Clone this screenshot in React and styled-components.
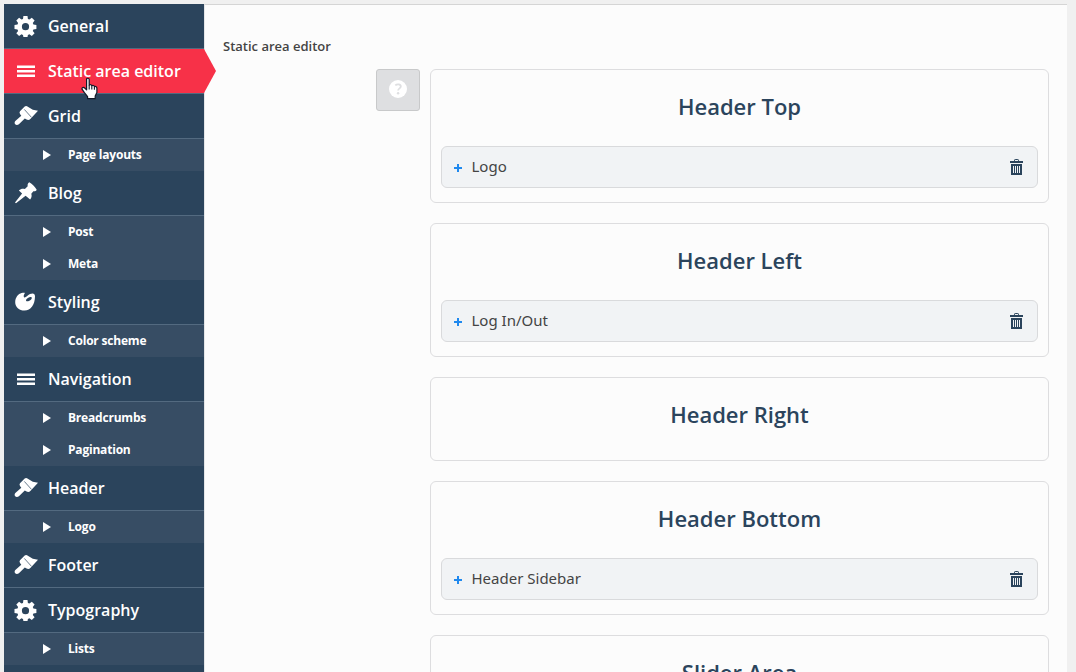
import React from 'react';
import styled, { createGlobalStyle, css } from 'styled-components';

const GlobalStyle = createGlobalStyle`
  * { box-sizing: border-box; }
  html, body { margin: 0; padding: 0; }
  body {
    background: #f0f0f0;
    font-family: "Open Sans", "Noto Sans", sans-serif;
    overflow: hidden;
  }
`;

const Page = styled.div`
  display: flex;
  height: 672px;
  padding: 4px 9px 0 4px;
  overflow: hidden;
`;

const Sidebar = styled.nav`
  flex: 0 0 200px;
  height: 668px;
  background: #2b445c;
  color: #fff;
`;

const MenuItem = styled.div`
  position: relative;
  display: flex;
  align-items: center;
  height: 45px;
  padding-left: 9px;
  border-bottom: 1px solid #536a80;
  font-size: 16px;
  font-weight: 600;
  white-space: nowrap;
  ${(p) =>
    p.$active &&
    css`
      background: #f73148;
      &::after {
        content: '';
        position: absolute;
        left: 200px;
        top: 0;
        border-style: solid;
        border-width: 22px 0 22px 12px;
        border-color: transparent transparent transparent #f73148;
      }
    `}
`;

const MenuIcon = styled.span`
  display: flex;
  flex: 0 0 35px;
  height: 24px;
  svg { display: block; }
`;

const MenuLabel = styled.span`
  padding-bottom: 1px;
`;

const SubList = styled.div`
  background: #374d64;
`;

const SubItem = styled.div`
  display: flex;
  align-items: center;
  height: 32px;
  padding-left: 39px;
  font-size: 12px;
  font-weight: 700;
  letter-spacing: -0.2px;
`;

const SubLabel = styled.span`
  padding-bottom: 2px;
`;

const Arrow = styled.i`
  margin-right: 17px;
  border-style: solid;
  border-width: 5px 0 5px 8px;
  border-color: transparent transparent transparent #fff;
`;

const Cursor = styled.svg`
  position: absolute;
  left: 75px;
  top: 28px;
  z-index: 2;
`;

const Panel = styled.main`
  flex: 1;
  height: 668px;
  padding: 32px 18px 0;
  background: #fcfcfc;
  border-top: 1px solid #d5d5d5;
  border-left: 1px solid #e4e6e8;
`;

const FieldLabel = styled.div`
  height: 32px;
  line-height: 18px;
  font-size: 13px;
  font-weight: 600;
  color: #444;
`;

const Field = styled.div`
  display: flex;
  justify-content: flex-end;
  align-items: flex-start;
  gap: 10px;
`;

const HelpButton = styled.button`
  display: flex;
  align-items: center;
  justify-content: center;
  width: 44px;
  height: 42px;
  padding: 0 0 2px;
  border: 1px solid #c8c9ca;
  border-radius: 3px;
  background: #dedfe1;
`;

const Areas = styled.div`
  display: flex;
  flex-direction: column;
  gap: 20px;
  width: 619px;
`;

const AreaCard = styled.section`
  min-height: 84px;
  padding: 10px 10px 14px;
  border: 1px solid #dddddf;
  border-radius: 6px;
`;

const AreaTitle = styled.h2`
  height: 56px;
  margin: 0;
  line-height: 53px;
  text-align: center;
  font-size: 22px;
  font-weight: 600;
  color: #2b445c;
`;

const Widget = styled.div`
  display: flex;
  align-items: center;
  height: 42px;
  margin-top: 10px;
  padding: 0 14px 0 12px;
  border: 1px solid #d9dadc;
  border-radius: 6px;
  background: #f1f3f5;
  color: #444;
  font-size: 15px;
`;

const WidgetName = styled.span`
  flex: 1;
  margin-left: 9.5px;
  padding-bottom: 2px;
  font-family: "Noto Sans", "Open Sans", sans-serif;
`;

const icons = {
  gear: (
    <svg width="24" height="24" viewBox="0 0 24 24" fill="#fff">
      <path fillRule="evenodd" d="M10.4 2h4.1l.4 3 1.5.6 2.4-1.8 2.8 2.8-1.8 2.4.6 1.5 3 .4V15l-3 .4-.6 1.5 1.8 2.4-2.8 2.8-2.4-1.8-1.5.6-.4 2h-4.1l-.4-2-1.5-.6-2.4 1.8-2.8-2.8 1.8-2.4-.6-1.5-3-.4v-4.1l3-.4.6-1.5-1.8-2.4 2.8-2.8 2.4 1.8L10 5zM12.5 9.1a3.6 3.6 0 1 0 0 7.2 3.6 3.6 0 0 0 0-7.2z" />
    </svg>
  ),
  menu: (
    <svg width="24" height="24" viewBox="0 0 24 24" fill="#fff">
      <path d="M4 6.4h18V9H4zM4 10.9h18v2.7H4zM4 15.5h18v2.6H4z" />
    </svg>
  ),
  brush: (
    <svg width="26" height="24" viewBox="0 0 26 24" fill="#fff">
      <path d="M7 7.2L11.7 2.4Q12.8 1.7 14 2.2L19.8 5.8 25 6.8 17.6 14.8Q15.6 16.9 13.6 15.6L11.8 14.4 5.9 20.2C4.8 21.2 3.2 21.3 2.2 20.3 1.3 19.2 1.5 17.7 2.6 16.7L8.3 11.8 7 9.9Q6 8.4 7 7.2z" />
      <path d="M11.3 5.4l7.2 8" fill="none" stroke="#2b445c" strokeWidth="0.7" />
    </svg>
  ),
  pin: (
    <svg width="25" height="24" viewBox="0 0 25 24" fill="#fff">
      <path d="M16.3 1.2C19.4 3 21.8 5.3 23.7 8.7c-.5 1.3-1.6 1.7-3.3 1.6l-2.1 2.4c.7 2.2.3 4.2-1.2 5.7L12.6 14.8 3 22.3l-1-.8 7.1-9-3.2-2.9c1.7-1.6 3.6-2.1 6-1.5l2.8-2.8c-.3-1.8.1-3.2 1.6-4.1z" />
    </svg>
  ),
  palette: (
    <svg width="24" height="24" viewBox="0 0 24 24" fill="#fff">
      <path fillRule="evenodd" d="M11.9 3c-.9 1.5-1.7 3.4-.8 4.3 1.3 1 3.1-1.8 5.9-3.2 2.9-1.4 5.1-.6 5 2.5-.2 8.3-4 14-10.5 14C6.2 20.6 2.2 17.2 2.2 12.3c0-4.8 3.1-8.4 6.4-9.2 1.4-.3 2.9-.4 3.3-.1zM14.9 8c-1.5 1.1-2.3 2.2-1.7 3 .7.8 3 .2 4.4-1 1.2-1.1 1.5-2.2.9-2.8-.7-.6-2.3-.1-3.6.8z" />
    </svg>
  ),
};

const Trash = () => (
  <svg width="14" height="16" viewBox="0 0 14 16">
    <path d="M5.5 2V1.2Q5.5.5 6.2.5h2.6q.7 0 .7.7V2" fill="none" stroke="#2b445c" />
    <path fillRule="evenodd" fill="#2b445c" d="M1 2h13v2H1zM2 5h11v11H2zM4 7v7h1V7zM6 7v7h1V7zM8 7v7h1V7zM10 7v7h1V7z" />
  </svg>
);

const Plus = () => (
  <svg width="8" height="10" viewBox="0 0 8 10" fill="#2089ee">
    <path d="M3 2h2v3h3v2H5v3H3V7H0V5h3z" />
  </svg>
);

const HandCursor = () => (
  <Cursor width="22" height="24" viewBox="0 0 22 24">
    <path d="M7.6 2.5C7.6.8 10 .8 10.2 2.5v5.6c1-.7 2.4-.4 2.6.6 1-.6 2.3-.3 2.6.8 1.3-.4 2.5.3 2.5 1.7v4.4l-1.7 3.5v2.6H8.6v-2L5.4 15.7 3 12.2c-.5-1.5 1.5-2.4 2.7-1.2l1.9 1.9z" fill="#fff" stroke="#111827" strokeWidth="1.2" strokeLinejoin="round" />
    <path d="M10.2 8v4.4M12.8 8.8v3.8M15.4 9.8v3" stroke="#111827" strokeWidth="1.1" />
  </Cursor>
);

const menu = [
  { icon: 'gear', label: 'General' },
  { icon: 'menu', label: 'Static area editor', active: true },
  { icon: 'brush', label: 'Grid', subs: ['Page layouts'] },
  { icon: 'pin', label: 'Blog', subs: ['Post', 'Meta'] },
  { icon: 'palette', label: 'Styling', subs: ['Color scheme'] },
  { icon: 'menu', label: 'Navigation', subs: ['Breadcrumbs', 'Pagination'] },
  { icon: 'brush', label: 'Header', subs: ['Logo'] },
  { icon: 'brush', label: 'Footer' },
  { icon: 'gear', label: 'Typography', subs: ['Lists'] },
];

const areas = [
  { title: 'Header Top', widget: 'Logo' },
  { title: 'Header Left', widget: 'Log In/Out' },
  { title: 'Header Right' },
  { title: 'Header Bottom', widget: 'Header Sidebar' },
  { title: 'Slider Area' },
];

export default function App() {
  return (
    <>
      <GlobalStyle />
      <Page>
        <Sidebar>
          {menu.map((m) => (
            <React.Fragment key={m.label}>
              <MenuItem $active={m.active}>
                <MenuIcon>{icons[m.icon]}</MenuIcon>
                <MenuLabel>{m.label}</MenuLabel>
                {m.active && <HandCursor />}
              </MenuItem>
              {m.subs && (
                <SubList>
                  {m.subs.map((s) => (
                    <SubItem key={s}>
                      <Arrow />
                      <SubLabel>{s}</SubLabel>
                    </SubItem>
                  ))}
                </SubList>
              )}
            </React.Fragment>
          ))}
        </Sidebar>
        <Panel>
          <FieldLabel>Static area editor</FieldLabel>
          <Field>
            <HelpButton aria-label="Help">
              <svg width="18" height="18" viewBox="0 0 18 18">
                <circle cx="9" cy="9" r="9" fill="#fff" />
                <path d="M6.3 5.4c1.7-1.6 5.5-1.4 5.5 1.1 0 2-2.7 1.8-2.7 4.1" fill="none" stroke="#dedfe1" strokeWidth="1.8" />
                <circle cx="9.1" cy="13.3" r="1.2" fill="#dedfe1" />
              </svg>
            </HelpButton>
            <Areas>
              {areas.map((a) => (
                <AreaCard key={a.title}>
                  <AreaTitle>{a.title}</AreaTitle>
                  {a.widget && (
                    <Widget>
                      <Plus />
                      <WidgetName>{a.widget}</WidgetName>
                      <Trash />
                    </Widget>
                  )}
                </AreaCard>
              ))}
            </Areas>
          </Field>
        </Panel>
      </Page>
    </>
  );
}
